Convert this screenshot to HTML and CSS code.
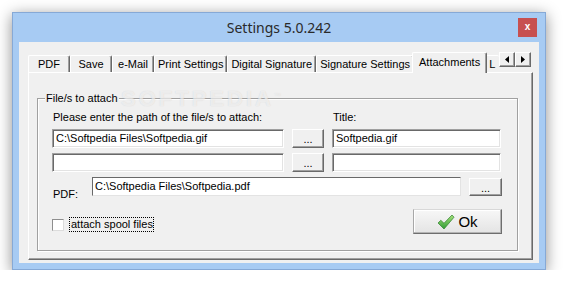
FILE: index.html
```html
<!DOCTYPE html>
<html lang="en">
<head>
    <meta charset="UTF-8">
    <title>Settings 5.0.242</title>
    <link rel="stylesheet" href="styles.css">
</head>
<body>
    <div class="window">
        <div class="titlebar">
            <span class="title">Settings 5.0.242</span>
            <span class="close">x</span>
        </div>
        <div class="client">
            <div class="tabstrip">
                <div class="tab">PDF</div>
                <div class="tab">Save</div>
                <div class="tab">e-Mail</div>
                <div class="tab">Print Settings</div>
                <div class="tab">Digital Signature</div>
                <div class="tab">Signature Settings</div>
                <div class="tab tab-active">Attachments</div>
                <div class="tab tab-cut">L</div>
                <div class="scroller">
                    <span class="arrow">
                        <svg width="4" height="7" viewBox="0 0 4 7"><path d="M4 0 L0 3.5 L4 7 Z" fill="#000"/></svg>
                    </span>
                    <span class="arrow">
                        <svg width="4" height="7" viewBox="0 0 4 7"><path d="M0 0 L4 3.5 L0 7 Z" fill="#000"/></svg>
                    </span>
                </div>
            </div>

            <div class="panel">
                <fieldset class="group">
                    <legend>File/s to attach</legend>

                    <div class="files">
                        <span class="caption">Please enter the path of the file/s to attach:</span>
                        <span></span>
                        <span class="caption">Title:</span>

                        <div class="field">C:\Softpedia Files\Softpedia.gif</div>
                        <div class="browse">...</div>
                        <div class="field">Softpedia.gif</div>

                        <div class="field"></div>
                        <div class="browse">...</div>
                        <div class="field"></div>
                    </div>

                    <div class="pdf-row">
                        <span class="pdf-label">PDF:</span>
                        <div class="field field-flat">C:\Softpedia Files\Softpedia.pdf</div>
                        <div class="browse">...</div>
                    </div>

                    <div class="bottom-row">
                        <label class="check">
                            <span class="box"></span>
                            <span class="focus">attach spool files</span>
                        </label>
                        <div class="ok">
                            <svg width="18" height="16" viewBox="0 0 18 16">
                                <defs>
                                    <linearGradient id="g" x1="0" y1="0" x2="0" y2="1">
                                        <stop offset="0" stop-color="#a8e47c"/>
                                        <stop offset="1" stop-color="#2f9a35"/>
                                    </linearGradient>
                                </defs>
                                <path d="M1 9 L3.8 6.3 L7 9.3 L15 1 L17 3.2 L7 15 Z" fill="url(#g)" stroke="#3d8a3a" stroke-width="0.8" stroke-linejoin="round"/>
                            </svg>
                            <span>Ok</span>
                        </div>
                    </div>
                </fieldset>
                <div class="watermark">SOFTPEDIA<sup>™</sup></div>
            </div>
        </div>
    </div>
</body>
</html>
```

FILE: styles.css
```css
body {
    margin: 0;
    background: #ffffff;
    font-family: "Liberation Sans", Arial, sans-serif;
    font-size: 11px;
    color: #000;
}
.window {
    margin: 12px 0 0 12px;
    width: 534px;
    height: 258px;
    box-sizing: border-box;
    border: 1px solid #86a9d6;
    background: #a7cbf3;
    box-shadow: 0 3px 14px rgba(0, 0, 0, 0.45);
    display: flex;
    flex-direction: column;
}
.titlebar {
    height: 29px;
    display: grid;
    grid-template-columns: 1fr auto 1fr;
    align-items: center;
}
.title {
    grid-column: 2;
    font-family: "Noto Sans", sans-serif;
    font-size: 14px;
    color: #2a2a2a;
}
.close {
    grid-column: 3;
    justify-self: end;
    margin-right: 8px;
    width: 19px;
    height: 19px;
    background: #c75050;
    color: #fff;
    font-weight: bold;
    font-size: 10px;
    line-height: 17px;
    text-align: center;
}
.client {
    margin: 0 6px 6px 6px;
    flex: 1;
    background: #f0f0f0;
    padding: 10px 6px 3px 9px;
    display: flex;
    flex-direction: column;
}

/* tabs */
.tabstrip {
    height: 20px;
    display: flex;
    align-items: flex-end;
}
.tab {
    height: 17px;
    line-height: 16px;
    padding: 0 3px;
    min-width: 42px;
    text-align: center;
    box-sizing: border-box;
    border-top: 1px solid #fff;
    border-left: 1px solid #fff;
    border-right: 1px solid #696969;
    box-shadow: inset -1px 0 #a0a0a0;
    border-radius: 2px 2px 0 0;
    white-space: nowrap;
    background: #f0f0f0;
}
.tab-active {
    height: 21px;
    line-height: 18px;
    margin: 0 -2px -1px;
    padding: 0 6px;
    position: relative;
    z-index: 1;
}
.tab-cut {
    flex: 1;
    min-width: 0;
    overflow: hidden;
    border-right: none;
    box-shadow: none;
    text-align: left;
    padding-left: 3px;
}
.scroller {
    align-self: flex-start;
    display: flex;
    margin-right: 2px;
}
.arrow {
    width: 16px;
    height: 15px;
    box-sizing: border-box;
    background: #f0f0f0;
    border-top: 1px solid #fff;
    border-left: 1px solid #fff;
    border-right: 1px solid #696969;
    border-bottom: 1px solid #696969;
    box-shadow: inset -1px -1px #a0a0a0;
    display: flex;
    align-items: center;
    justify-content: center;
}

/* panel */
.panel {
    flex: 1;
    position: relative;
    box-sizing: border-box;
    border-top: 1px solid #fff;
    border-left: 1px solid #fff;
    border-right: 1px solid #696969;
    border-bottom: 1px solid #696969;
    box-shadow: inset -1px -1px #a0a0a0;
    padding: 19px 14px 0 8px;
}
.group {
    margin: 0;
    padding: 7px 15px 14px 14px;
    height: 159px;
    box-sizing: border-box;
    border: 1px solid #a0a0a0;
    box-shadow: inset 1px 1px #fff, 1px 1px #fff;
}
.group legend {
    padding: 0 1px;
    margin-left: -7px;
    background: #f0f0f0;
}
.files {
    display: grid;
    grid-template-columns: 232px 32px 169px;
    column-gap: 8px;
    row-gap: 5px;
}
.caption {
    margin-bottom: 1px;
    padding-left: 1px;
}
.field {
    height: 19px;
    box-sizing: border-box;
    background: #fff;
    border-top: 1px solid #a0a0a0;
    border-left: 1px solid #a0a0a0;
    border-right: 1px solid #fff;
    border-bottom: 1px solid #fff;
    box-shadow: inset 1px 1px #696969, inset -1px -1px #e3e3e3;
    padding: 0 3px;
    line-height: 17px;
    white-space: nowrap;
    overflow: hidden;
}
.field-flat {
    flex: 1;
    border-top-color: #696969;
    border-left-color: #696969;
    border-right-color: #e3e3e3;
    border-bottom-color: #e3e3e3;
    box-shadow: none;
    padding-left: 2px;
}
.browse {
    height: 19px;
    box-sizing: border-box;
    background: #f0f0f0;
    border-top: 1px solid #fff;
    border-left: 1px solid #fff;
    border-right: 1px solid #696969;
    border-bottom: 1px solid #696969;
    box-shadow: inset -1px -1px #a0a0a0;
    text-align: center;
    line-height: 19px;
}
.pdf-row {
    margin-top: 5px;
    display: flex;
    align-items: flex-end;
}
.pdf-label {
    width: 39px;
    padding-left: 1px;
    line-height: 13px;
    margin-bottom: -5px;
}
.pdf-row .browse {
    width: 33px;
    margin-left: 8px;
    height: 18px;
}
.bottom-row {
    margin-top: 13px;
    display: flex;
    justify-content: space-between;
    align-items: flex-end;
}
.check {
    display: flex;
    align-items: center;
    gap: 5px;
    margin-bottom: 2px;
}
.box {
    width: 12px;
    height: 12px;
    box-sizing: border-box;
    background: #fff;
    border: 1px solid #8e8e8e;
    border-right-color: #dcdcdc;
    border-bottom-color: #dcdcdc;
}
.focus {
    border: 1px dotted #000;
    padding: 0 0 1px 1px;
    line-height: 12px;
}
.ok {
    width: 89px;
    height: 25px;
    box-sizing: border-box;
    background: linear-gradient(#f7f7f7, #e4e4e4);
    border-top: 1px solid #d8d8d8;
    border-left: 1px solid #a8a8a8;
    border-right: 1px solid #6e6e6e;
    border-bottom: 1px solid #6e6e6e;
    box-shadow: inset -1px -1px #b4b4b4, inset 1px 1px #fff;
    display: flex;
    align-items: center;
    justify-content: center;
    gap: 3px;
    font-size: 15px;
}
.watermark {
    position: absolute;
    left: 92px;
    top: 13px;
    font-size: 22px;
    font-weight: bold;
    letter-spacing: 3px;
    color: rgba(255, 255, 255, 0.6);
    text-shadow: 0 0 1px rgba(150, 150, 150, 0.35);
    pointer-events: none;
}
.watermark sup {
    font-size: 7px;
    font-weight: normal;
    letter-spacing: 0;
}
```
